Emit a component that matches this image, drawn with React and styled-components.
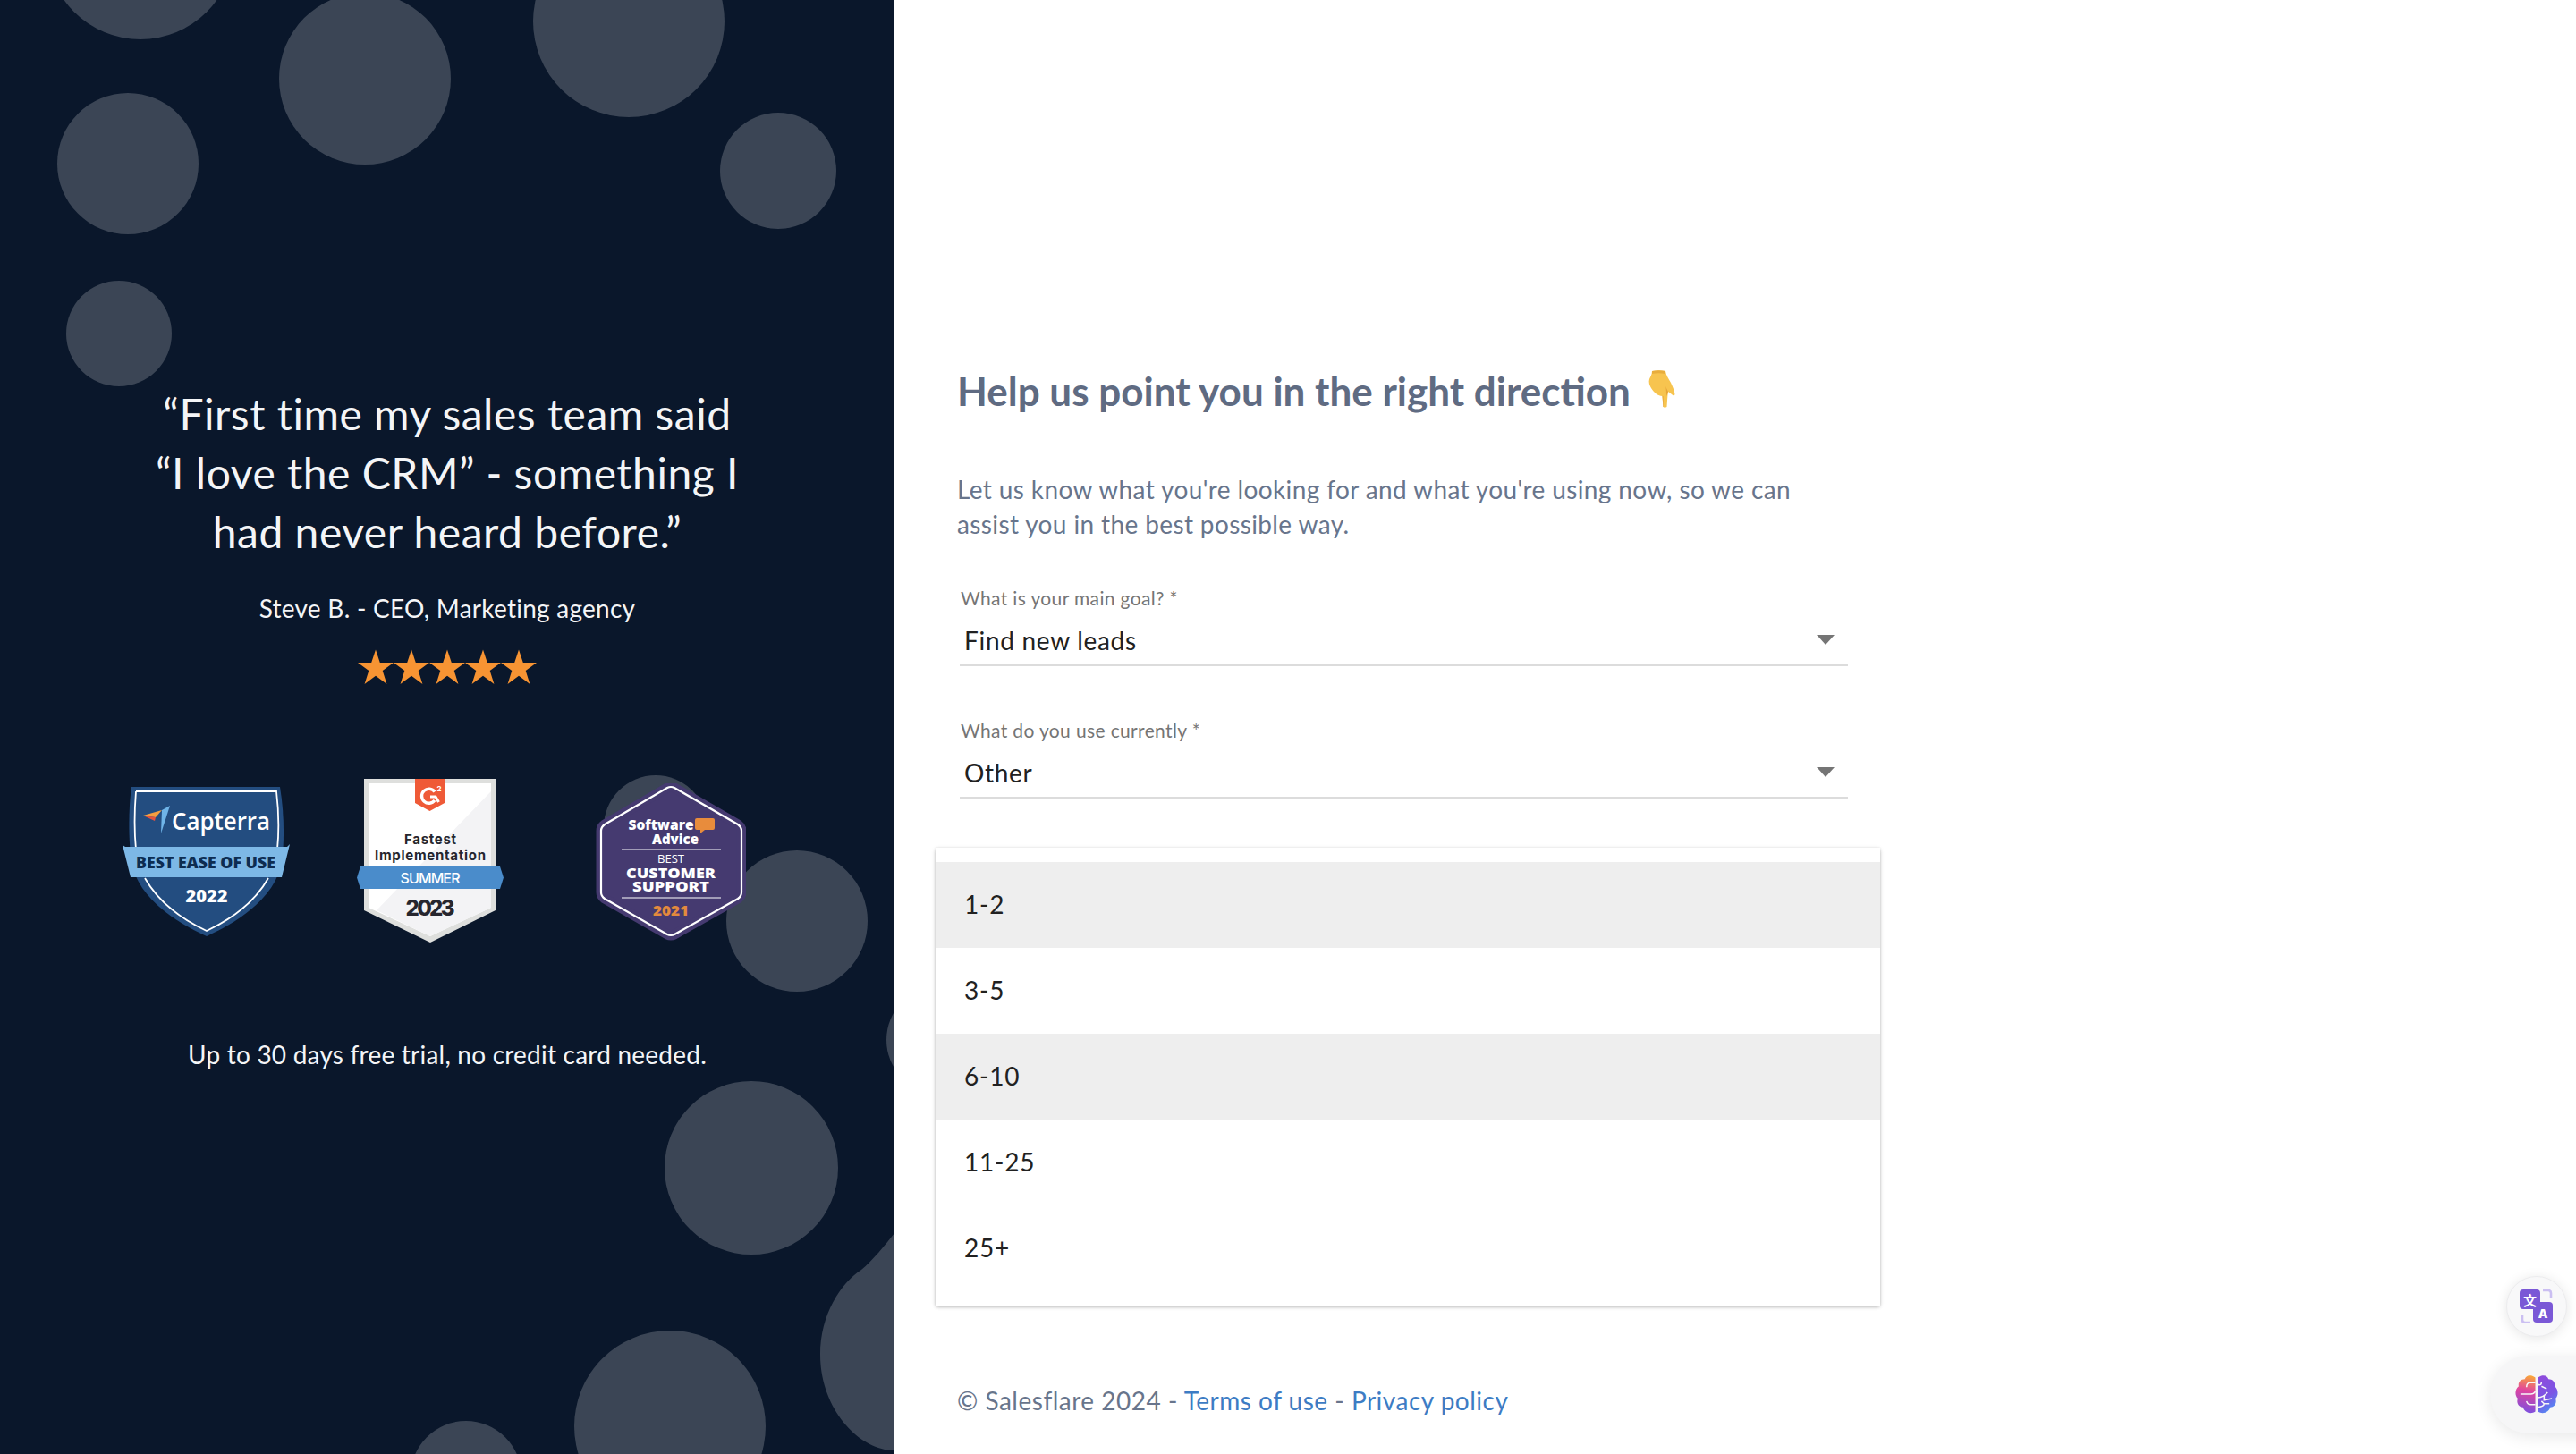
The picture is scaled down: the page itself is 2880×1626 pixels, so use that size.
import React from "react";
import styled, { createGlobalStyle } from "styled-components";

const Global = createGlobalStyle`
  html, body { margin: 0; padding: 0; background: #fff; }
  body { font-family: "Lato", "Noto Sans", sans-serif; overflow: hidden; }
  * { box-sizing: border-box; }
`;

const Page = styled.div`
  display: flex;
  width: 2880px;
  height: 1626px;
  overflow: hidden;
  position: relative;
`;

const Side = styled.aside`
  position: relative;
  flex: 0 0 1000px;
  height: 100%;
  background: #0a172b;
  overflow: hidden;
  display: flex;
  flex-direction: column;
  align-items: center;
  justify-content: center;
  padding-top: 2px;
  color: #fff;
`;

const Dots = styled.svg`
  position: absolute;
  inset: 0;
  width: 1000px;
  height: 1626px;
`;

const Quote = styled.blockquote`
  position: relative;
  margin: 0;
  width: 700px;
  font-size: 48px;
  line-height: 66px;
  text-align: center;
  letter-spacing: 0.52px;
  color: #f4f5f7;
`;

const Author = styled.p`
  position: relative;
  margin: 33px 0 0;
  font-size: 28px;
  line-height: 38px;
  letter-spacing: 0.25px;
  color: #f4f5f7;
`;

const Stars = styled.div`
  position: relative;
  display: flex;
  margin-top: 27px;
  height: 40px;
`;

const Star = styled.svg`
  width: 40px;
  height: 40px;
  display: block;
  fill: #f79433;
`;

const Badges = styled.div`
  position: relative;
  display: flex;
  align-items: center;
  margin-top: 105px;
  margin-left: -29px;
`;

const BadgeSvg = styled.svg`
  display: block;
  flex: none;
  margin-left: ${(p) => p.$gap || 0}px;
  margin-top: ${(p) => p.$drop || 0}px;
`;

const BText = styled.text`
  font-family: ${(p) => p.$font || '"Open Sans"'}, sans-serif;
  font-size: ${(p) => p.$size}px;
  font-weight: ${(p) => p.$weight || 700};
  fill: ${(p) => p.$fill || "#fff"};
  text-anchor: middle;
  dominant-baseline: central;
`;

const Trial = styled.p`
  position: relative;
  margin: 106px 0 0;
  font-size: 28px;
  line-height: 38px;
  letter-spacing: 0.22px;
  color: #f4f5f7;
`;

const Main = styled.main`
  flex: 1;
  height: 100%;
  display: flex;
  flex-direction: column;
  padding: 409px 0 0 70px;
`;

const Title = styled.h1`
  margin: 0;
  display: flex;
  align-items: center;
  gap: 20px;
  height: 56px;
  font-size: 44px;
  font-weight: 700;
  color: #5f6b82;
  letter-spacing: 0;
  white-space: nowrap;
`;

const Emoji = styled.svg`
  display: block;
  width: 30px;
  height: 42px;
  margin-top: -4px;
`;

const Intro = styled.p`
  margin: 63px 0 0;
  width: 960px;
  font-size: 28px;
  line-height: 39px;
  color: #68758c;
  letter-spacing: 0.38px;
`;

const Field = styled.div`
  position: relative;
  width: 993px;
  margin: ${(p) => p.$top}px 0 0 3px;
  height: 89px;
  border-bottom: 2px solid #dcdcdc;
  padding-left: 5px;
`;

const Label = styled.label`
  display: block;
  font-size: 21px;
  line-height: 26px;
  height: 42px;
  margin-left: -4px;
  color: #757575;
  letter-spacing: 0.36px;
`;

const Value = styled.div`
  font-size: 28px;
  line-height: 36px;
  color: #212121;
  letter-spacing: 0.7px;
`;

const Caret = styled.span`
  position: absolute;
  right: 15px;
  top: 54px;
  width: 0;
  height: 0;
  border-left: 10.5px solid transparent;
  border-right: 10.5px solid transparent;
  border-top: 11px solid #757575;
`;

const MenuAnchor = styled.div`
  position: relative;
  height: 0;
`;

const Menu = styled.ul`
  position: absolute;
  left: -24px;
  top: 55px;
  width: 1056px;
  margin: 0;
  padding: 16px 0;
  list-style: none;
  background: #fff;
  box-shadow: 0 2px 4px -1px rgba(0, 0, 0, 0.3), 0 1px 5px 0 rgba(0, 0, 0, 0.1), 0 0 2px rgba(0, 0, 0, 0.08);
`;

const Option = styled.li`
  height: 96px;
  padding: 0 0 2px 32px;
  display: flex;
  align-items: center;
  font-size: 28px;
  color: #212121;
  letter-spacing: 0.8px;
  background: ${(p) => (p.$on ? "#eeeeee" : "#fff")};
`;

const Footer = styled.footer`
  margin-top: auto;
  padding-bottom: 41px;
  font-size: 28px;
  line-height: 38px;
  color: #68758c;
  letter-spacing: 0.5px;
`;

const FootLink = styled.a`
  color: #3d7cc4;
  text-decoration: none;
`;

const RoundBtn = styled.button`
  position: absolute;
  left: 2802px;
  top: 1427px;
  width: 68px;
  height: 68px;
  padding: 0;
  border: 1px solid #ececee;
  border-radius: 50%;
  background: #f8f8f9;
  box-shadow: 0 2px 14px rgba(0, 0, 0, 0.1);
  display: flex;
  align-items: center;
  justify-content: center;
`;

const Pill = styled.button`
  position: absolute;
  left: 2784px;
  top: 1516px;
  width: 120px;
  height: 87px;
  padding: 0 0 0 28px;
  border: 0;
  border-radius: 44px 0 0 44px;
  background: #f6f6f7;
  box-shadow: 0 4px 18px rgba(0, 0, 0, 0.09);
  display: flex;
  align-items: center;
`;

const dots = [
  [157, -61, 105], [408, 88, 96], [703, 24, 107], [143, 183, 79], [870, 191, 65],
  [133, 373, 59], [733, 925, 58], [891, 1030, 79], [1051, 1163, 60], [840, 1306, 97],
  [749, 1595, 107], [521, 1651, 62],
];

const StarIcon = () => (
  <Star viewBox="0 0 40 40">
    <path d="M20 0.5l4.8 14.4H40l-12.3 9 4.7 15-12.4-9.2-12.4 9.2 4.7-15L0 14.9h15.2z" />
  </Star>
);

const Capterra = () => (
  <BadgeSvg $drop={2} width="187" height="167" viewBox="0 0 187 167">
    <path d="M10 0H176C181 30 181 62 178 84C172 118 140 146 94 167C48 146 16 118 10 84C7 62 6 30 10 0Z" fill="#234d80" />
    <path d="M15 5H172C175 30 175 50 173 70M163 102C150 125 128 145 94 161C60 145 38 125 25 102M15 70C13 50 13 30 15 5" fill="none" stroke="#fff" strokeWidth="1.8" />
    <polygon points="0,65 3,67 184,67 187,64 178,101 9,101" fill="#7db8e6" />
    <polygon points="23,32 44,26 37,34" fill="#f59e3f" />
    <polygon points="23,32 37,34 36,38" fill="#e2533f" />
    <polygon points="53,21 43,52 44,26" fill="#6fb4e8" />
    <BText x="110" y="37" $size={27} $weight={600} textLength="110" lengthAdjust="spacingAndGlyphs">Capterra</BText>
    <BText x="93" y="84" $size={17} $weight={800} $fill="#0d2d52" textLength="156" lengthAdjust="spacingAndGlyphs">BEST EASE OF USE</BText>
    <BText x="94" y="121" $size={20} $weight={800} textLength="47" lengthAdjust="spacingAndGlyphs">2022</BText>
  </BadgeSvg>
);

const G2 = () => (
  <BadgeSvg $gap={75} width="164" height="183" viewBox="0 0 164 183">
    <polygon points="8,0 155,0 155,147 82,183 8,147" fill="#dedfdd" />
    <polygon points="13,5 150,5 150,144 82,176 13,144" fill="#fff" />
    <polygon points="150,14 150,144 82,176 22,147" fill="#f3f3f5" />
    <polygon points="65,0 98,0 98,27 81.5,36 65,27" fill="#ef5a37" />
    <path d="M87 14.5A8 8 0 1 0 87 24" fill="none" stroke="#fff" strokeWidth="3.4" />
    <path d="M82 20h6l3.5 6" fill="none" stroke="#fff" strokeWidth="3" />
    <BText x="92" y="11" $size={8} $weight={700} $font='"Inter"'>2</BText>
    <BText x="82" y="67" $size={15} $weight={700} $fill="#26262e" $font='"Inter"' textLength="58">Fastest</BText>
    <BText x="82" y="85" $size={15} $weight={700} $fill="#26262e" $font='"Inter"' textLength="124">Implementation</BText>
    <polygon points="4,98 160,98 164,110.5 160,123 4,123 0,110.5" fill="#4a8ccb" />
    <BText x="82" y="110.5" $size={16} $weight={500} $font='"Inter"' textLength="67">SUMMER</BText>
    <BText x="82" y="144" $size={24} $weight={800} $fill="#26262e" $font='"Inter"' textLength="55">2023</BText>
  </BadgeSvg>
);

const SoftwareAdvice = () => {
  const hex = "M80 5Q84 3 88 5L159 46Q163 49 163 53V122Q163 126 159 129L88 169Q84 171 80 169L10 129Q6 126 6 122V53Q6 49 10 46Z";
  return (
    <BadgeSvg $gap={103} $drop={2} width="168" height="176" viewBox="0 0 168 176">
      <path d={hex} fill="#453a70" stroke="#453a70" strokeWidth="11" strokeLinejoin="round" />
      <path d={hex} fill="none" stroke="#fff" strokeWidth="2.2" />
      <BText x="73" y="46" $size={16} $weight={800} textLength="73" lengthAdjust="spacingAndGlyphs">Software</BText>
      <BText x="89" y="62" $size={16} $weight={800} textLength="52" lengthAdjust="spacingAndGlyphs">Advice</BText>
      <path d="M113 39H131Q133 39 133 41V50Q133 52 131 52H122L117 56V52H113Q111 52 111 50V41Q111 39 113 39Z" fill="#e88c3c" />
      <line x1="29" y1="74" x2="140" y2="74" stroke="#fff" strokeWidth="1" />
      <BText x="84" y="84" $size={12} $weight={400} textLength="30" lengthAdjust="spacingAndGlyphs">BEST</BText>
      <BText x="84" y="100" $size={16} $weight={800} textLength="100" lengthAdjust="spacingAndGlyphs">CUSTOMER</BText>
      <BText x="84" y="115" $size={16} $weight={800} textLength="86" lengthAdjust="spacingAndGlyphs">SUPPORT</BText>
      <line x1="29" y1="128" x2="140" y2="128" stroke="#fff" strokeWidth="1" />
      <BText x="84" y="142" $size={15} $weight={800} $fill="#e38a3d" textLength="40" lengthAdjust="spacingAndGlyphs">2021</BText>
    </BadgeSvg>
  );
};

const PointingHand = () => (
  <Emoji viewBox="0 0 30 42">
    <path d="M4 1C9 0 14 0 19 1C20 6 22 9 25 14C27 18 29 23 29.5 27C29 29 27.5 28.5 26 27L22 24C21 30 21 36 20.5 41C19 42 17.5 42 16.5 41C16 37 16 33 15.5 29C11 29 6 25 3 20C1 17 0 13 1 10C2 7 4 5 4 1Z" fill="#f7c44f" />
    <path d="M4 1C9 0 14 0 19 1L18.5 4C13 3 9 3 4 4Z" fill="#e8ad3c" />
    <path d="M16.5 29C16.5 33 17 37 17 41L16.5 41C16 37 16 33 15.5 29ZM22 24L19 18C20 21 20 25 20 29C21 27 21.5 26 22 24Z" fill="#e5a43a" />
  </Emoji>
);

const TranslateIcon = () => (
  <svg width="38" height="38" viewBox="0 0 38 38">
    <path d="M26 1H32Q35 1 35 4V9" fill="none" stroke="#cbbff2" strokeWidth="2.6" />
    <path d="M3 29V34Q3 37 6 37H12" fill="none" stroke="#cbbff2" strokeWidth="2.6" />
    <rect x="0" y="0" width="23" height="22" rx="4" fill="#7a58d6" />
    <rect x="15" y="14" width="22" height="23" rx="4" fill="#7a58d6" />
    <BText x="11.5" y="11" $size={15} $weight={700} $font='"Noto Sans CJK SC"'>文</BText>
    <BText x="26" y="26" $size={14} $weight={800}>A</BText>
  </svg>
);

const BrainIcon = () => {
  const lobe = "M23 3C17 -1 12 1 11 5C6 5 3 9 4 13C0 16 -1 23 3 27C1 32 4 37 9 37C10 42 17 46 23 42Z";
  const rlobe = "M26 3C32 -1 37 1 38 5C43 5 46 9 45 13C49 16 50 23 46 27C48 32 45 37 40 37C39 42 32 46 26 42Z";
  return (
    <svg width="48" height="45" viewBox="0 0 49 45">
      <defs>
        <linearGradient id="brainL" x1="0.6" y1="0" x2="0.5" y2="1">
          <stop offset="0" stopColor="#f9a53a" />
          <stop offset="0.4" stopColor="#e0459f" />
          <stop offset="1" stopColor="#7b4fe0" />
        </linearGradient>
        <linearGradient id="brainR" x1="0.3" y1="0" x2="0.7" y2="1">
          <stop offset="0" stopColor="#8d4bdc" />
          <stop offset="0.55" stopColor="#7b55e4" />
          <stop offset="1" stopColor="#4b95f6" />
        </linearGradient>
      </defs>
      <path d={lobe} fill="url(#brainL)" />
      <path d={rlobe} fill="url(#brainR)" />
      <g fill="none" stroke="#f6f6f7" strokeWidth="1.6">
        <path d="M23 9H17Q13 9 13 14" />
        <path d="M6 22H18Q21 22 23 19" />
        <path d="M23 34H18Q14 34 13 30" />
        <path d="M26 11Q30 13 30 8M30 13L36 16" />
        <path d="M26 26Q32 26 37 20M33 23V29L42 27" />
        <path d="M26 37Q33 36 33 33L30 30M33 33L39 33" />
      </g>
    </svg>
  );
};

export default function App() {
  return (
    <Page>
      <Global />
      <Side>
        <Dots viewBox="0 0 1000 1626">
          <g fill="#fff" fillOpacity="0.2">
            {dots.map(([cx, cy, r]) => (
              <circle key={`${cx}-${cy}`} cx={cx} cy={cy} r={r} />
            ))}
            <path d="M917 1515C917 1470 940 1435 963 1420C975 1410 990 1392 1000 1379V1622C960 1622 917 1575 917 1515Z" />
          </g>
        </Dots>
        <Quote>
          “First time my sales team said
          <br />
          “I love the CRM” - something I
          <br />
          had never heard before.”
        </Quote>
        <Author>Steve B. - CEO, Marketing agency</Author>
        <Stars>
          {[0, 1, 2, 3, 4].map((i) => (
            <StarIcon key={i} />
          ))}
        </Stars>
        <Badges>
          <Capterra />
          <G2 />
          <SoftwareAdvice />
        </Badges>
        <Trial>Up to 30 days free trial, no credit card needed.</Trial>
      </Side>
      <Main>
        <Title>
          Help us point you in the right direction
          <PointingHand />
        </Title>
        <Intro>
          Let us know what you're looking for and what you're using now, so we can assist you in the best possible way.
        </Intro>
        <Field $top={50}>
          <Label>What is your main goal? *</Label>
          <Value>Find new leads</Value>
          <Caret />
        </Field>
        <Field $top={59}>
          <Label>What do you use currently *</Label>
          <Value>Other</Value>
          <Caret />
        </Field>
        <MenuAnchor>
          <Menu>
            <Option $on>1-2</Option>
            <Option>3-5</Option>
            <Option $on>6-10</Option>
            <Option>11-25</Option>
            <Option>25+</Option>
          </Menu>
        </MenuAnchor>
        <Footer>
          © Salesflare 2024 - <FootLink href="#">Terms of use</FootLink> - <FootLink href="#">Privacy policy</FootLink>
        </Footer>
      </Main>
      <RoundBtn aria-label="Translate">
        <TranslateIcon />
      </RoundBtn>
      <Pill aria-label="Assistant">
        <BrainIcon />
      </Pill>
    </Page>
  );
}
